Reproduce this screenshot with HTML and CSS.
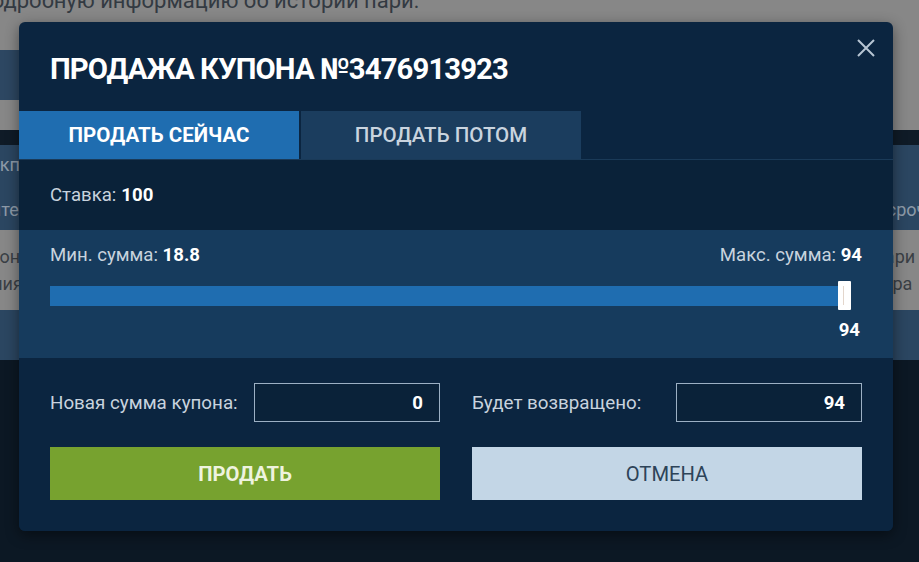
FILE: index.html
```html
<!DOCTYPE html>
<html lang="ru">
  <head>
    <meta charset="UTF-8" />
    <meta name="viewport" content="width=device-width, initial-scale=1.0" />
    <title>Продажа купона</title>
    <link rel="stylesheet" href="styles.css">
  </head>
  <body>
    <div class="page">
      <div class="row row-top">
        <p class="intro">Подробную информацию об истории пари:</p>
      </div>
      <div class="row row-tabs">
        <div class="page-tab"></div>
      </div>
      <div class="row row-grey"></div>
      <div class="row row-line"></div>
      <div class="row row-blue">
        <div class="edge edge-left">
          <span class="w1">Чекпоинт</span>
          <span class="w2">Интерфейс</span>
        </div>
        <div class="edge edge-right">
          <span class="w3">Досрочная</span>
        </div>
      </div>
      <div class="row row-info">
        <div class="edge edge-left">
          <span class="w4">Сезон</span>
          <span class="w5">Линия</span>
        </div>
        <div class="edge edge-right">
          <span class="w6">Пари</span>
          <span class="w7">Игра</span>
        </div>
      </div>
      <div class="row row-blue2"></div>
      <div class="row row-bottom"></div>
    </div>

    <div class="modal">
      <button class="close" aria-label="Закрыть">
        <svg width="20" height="20" viewBox="0 0 20 20">
          <path d="M2 2 L18 18 M18 2 L2 18" stroke="#b7c5d3" stroke-width="2" fill="none" />
        </svg>
      </button>
      <h1>ПРОДАЖА КУПОНА №3476913923</h1>

      <div class="tabs">
        <div class="tab active">ПРОДАТЬ СЕЙЧАС</div>
        <div class="tab">ПРОДАТЬ ПОТОМ</div>
      </div>

      <div class="stake">Ставка: <b>100</b></div>

      <div class="range">
        <div class="range-labels">
          <span>Мин. сумма: <b>18.8</b></span>
          <span>Макс. сумма: <b>94</b></span>
        </div>
        <div class="track">
          <div class="fill"></div>
          <div class="thumb"></div>
        </div>
        <div class="range-value">94</div>
      </div>

      <div class="sell">
        <div class="fields">
          <label class="field">
            <span>Новая сумма купона:</span>
            <input type="text" value="0" />
          </label>
          <label class="field">
            <span>Будет возвращено:</span>
            <input type="text" value="94" />
          </label>
        </div>
        <div class="actions">
          <button class="btn btn-sell">ПРОДАТЬ</button>
          <button class="btn btn-cancel">ОТМЕНА</button>
        </div>
      </div>
    </div>
  </body>
</html>
```

FILE: styles.css
```css
* {
  margin: 0;
  padding: 0;
  box-sizing: border-box;
  font-family: Roboto, "Liberation Sans", sans-serif;
}

body {
  background: #0c1824;
  height: 562px;
  overflow: hidden;
}

/* dimmed page behind the popup */

.page {
  display: flex;
  flex-direction: column;
}

.row {
  display: flex;
  justify-content: space-between;
}

.row-top {
  height: 50px;
  background: #878787;
}

.intro {
  margin-top: -12px;
  margin-left: -24px;
  font-size: 22px;
  color: #333a42;
  white-space: nowrap;
}

.row-tabs {
  height: 50px;
  background: #878787;
}

.page-tab {
  width: 220px;
  background: #2d4762;
}

.row-grey {
  height: 30px;
  background: #878787;
}

.row-line {
  height: 15px;
  background: #0f1b27;
}

.row-blue {
  height: 85px;
  background: #2b4661;
  color: #8d9aa8;
}

.row-info {
  height: 80px;
  background: #878787;
  color: #3a3f45;
}

.row-blue2 {
  height: 50px;
  background: #2b4661;
}

.row-bottom {
  height: 202px;
  background: #0c1824;
}

.edge {
  width: 19px;
  overflow: hidden;
  display: flex;
  flex-direction: column;
  font-size: 18px;
  line-height: 20px;
  white-space: nowrap;
}

.edge-right {
  width: 26px;
}

.row-blue .edge-left { padding-top: 10px; gap: 25px; }
.row-blue .edge-right { padding-top: 55px; }
.row-info .edge { padding-top: 17px; gap: 7px; }

.w1 { margin-left: -22px; }
.w2 { margin-left: -22px; }
.w3 { margin-left: -30px; }
.w4 { margin-left: -31px; }
.w5 { margin-left: -31px; }
.w6 { margin-left: -21px; }
.w7 { margin-left: -21px; }

/* popup */

.modal {
  position: absolute;
  left: 19px;
  top: 22px;
  width: 874px;
  height: 509px;
  background: #0b2540;
  border-radius: 6px;
  box-shadow: 0 4px 14px rgba(0, 0, 0, 0.45);
  overflow: hidden;
  display: flex;
  flex-direction: column;
}

.close {
  position: absolute;
  right: 17px;
  top: 16px;
  background: none;
  border: none;
  cursor: pointer;
}

h1 {
  height: 89px;
  padding: 30px 31px 0;
  font-size: 29.3px;
  font-weight: 700;
  letter-spacing: -0.9px;
  color: #ffffff;
}

.tabs {
  display: flex;
  gap: 2px;
  height: 49px;
  border-bottom: 1px solid #1a3a58;
}

.tab {
  width: 280px;
  display: flex;
  align-items: center;
  justify-content: center;
  font-size: 20.5px;
  font-weight: 500;
  color: #c9d4df;
  background: #1b3d5e;
}

.tab.active {
  background: #1f6db0;
  color: #ffffff;
  font-weight: 700;
}

.stake {
  height: 70px;
  padding: 0 31px;
  display: flex;
  align-items: center;
  gap: 5px;
  font-size: 18.6px;
  color: #c8d3de;
  background: #0a2239;
}

.stake b,
.range b {
  color: #ffffff;
}

.range {
  height: 128px;
  padding: 14px 31px 0;
  background: #163b5d;
}

.range-labels {
  display: flex;
  justify-content: space-between;
  font-size: 18.6px;
  color: #c8d3de;
}

.track {
  position: relative;
  margin-top: 20px;
  width: 800px;
  height: 20px;
  background: #1f6db0;
}

.thumb {
  position: absolute;
  right: -1px;
  top: -5px;
  width: 13px;
  height: 29px;
  background: #ffffff;
  border-radius: 1px;
}

.thumb::after {
  content: "";
  position: absolute;
  left: 5px;
  top: 5px;
  width: 1px;
  height: 19px;
  background: #e3d6cc;
}

.range-value {
  margin-top: 13px;
  padding-right: 2px;
  text-align: right;
  font-size: 18.6px;
  font-weight: 700;
  color: #ffffff;
}

.sell {
  flex: 1;
  padding: 25px 31px 0;
  background: #0b2540;
}

.fields {
  display: flex;
  gap: 32px;
}

.field {
  flex: 1;
  display: flex;
  align-items: center;
  justify-content: space-between;
  font-size: 18.8px;
  color: #c8d3de;
}

.field input {
  width: 186px;
  height: 39px;
  padding: 0 16px;
  border: 1px solid #9cb0c4;
  background: #0a2239;
  color: #ffffff;
  font-size: 18.6px;
  font-weight: 700;
  text-align: right;
  outline: none;
}

.actions {
  display: flex;
  gap: 32px;
  margin-top: 25px;
}

.btn {
  flex: 1;
  height: 53px;
  border: none;
  font-size: 20.2px;
  cursor: pointer;
}

.btn-sell {
  background: #77a22f;
  color: #eef3df;
  font-weight: 700;
}

.btn-cancel {
  background: #c3d6e6;
  color: #2d4358;
}
```
